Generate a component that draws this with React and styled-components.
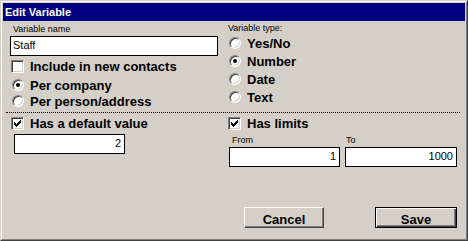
import React from "react";
import styled, { createGlobalStyle, css } from "styled-components";

const GlobalStyle = createGlobalStyle`
  html, body {
    margin: 0;
    padding: 0;
    background: #d4d0c8;
  }
  body {
    font-family: "Liberation Sans", Arial, sans-serif;
    color: #000;
  }
`;

const Window = styled.div`
  box-sizing: border-box;
  width: 468px;
  height: 241px;
  display: flex;
  background: #d4d0c8;
  border: 1px solid;
  border-color: #d4d0c8 #404040 #404040 #d4d0c8;
`;

const Frame = styled.div`
  flex: 1;
  display: flex;
  flex-direction: column;
  padding: 1px;
  border: 1px solid;
  border-color: #fff #808080 #808080 #fff;
`;

const TitleBar = styled.div`
  box-sizing: border-box;
  height: 18px;
  padding: 1px 0 0 2px;
  background: #000080;
  color: #fff;
  font-weight: bold;
  font-size: 11px;
  line-height: 17px;
`;

const Body = styled.div`
  flex: 1;
  display: flex;
  flex-direction: column;
  padding: 2px 8px 0 7px;
`;

const Section = styled.div`
  display: grid;
  grid-template-columns: 218px 1fr;
`;

const Column = styled.div`
  display: flex;
  flex-direction: column;
`;

const SmallLabel = styled.div`
  height: ${(p) => p.$h || 13}px;
  padding-left: ${(p) => p.$indent || 0}px;
  font-size: 9px;
  line-height: ${(p) => p.$h || 13}px;
`;

const Field = styled.div`
  box-sizing: border-box;
  width: ${(p) => p.$w}px;
  height: 20px;
  margin-left: ${(p) => p.$indent || 0}px;
  padding: 0 3px 0 2px;
  background: #fff;
  border: 1px solid #000;
  font-size: 11px;
  line-height: 17px;
  text-align: ${(p) => (p.$number ? "right" : "left")};
`;

const Option = styled.div`
  display: flex;
  align-items: center;
  gap: 6px;
  height: ${(p) => p.$h}px;
  padding-left: ${(p) => p.$indent || 0}px;
  font-weight: bold;
  font-size: 13px;
  white-space: nowrap;
`;

const CheckBox = styled.span`
  box-sizing: border-box;
  flex-shrink: 0;
  width: 13px;
  height: 13px;
  display: flex;
  align-items: center;
  justify-content: center;
  background: #fff;
  border: 1px solid;
  border-color: #808080 #fff #fff #808080;
  box-shadow: inset 1px 1px 0 #404040, inset -1px -1px 0 #d4d0c8;
`;

const RadioDot = styled.span`
  box-sizing: border-box;
  flex-shrink: 0;
  width: 12px;
  height: 12px;
  display: flex;
  align-items: center;
  justify-content: center;
  border-radius: 50%;
  background: #fff;
  border: 1px solid;
  border-color: #808080 #fff #fff #808080;
  box-shadow: inset 1px 1px 0 #404040, inset -1px -1px 0 #d4d0c8;
  &::after {
    content: "";
    width: 4px;
    height: 4px;
    border-radius: 50%;
    background: ${(p) => (p.$on ? "#000" : "transparent")};
  }
`;

const Divider = styled.div`
  margin: 3px -3px 0 -4px;
  border-top: 1px dotted #000;
`;

const Limits = styled.div`
  display: grid;
  grid-template-columns: 111px 112px;
  column-gap: 5px;
  margin-left: 1px;
`;

const Footer = styled.div`
  display: flex;
  justify-content: flex-end;
  gap: 51px;
  margin-top: 40px;
`;

const Button = styled.div`
  box-sizing: border-box;
  width: ${(p) => p.$w}px;
  height: 21px;
  padding-top: 5px;
  text-align: center;
  font-weight: bold;
  font-size: 13px;
  line-height: 14px;
  background: #d4d0c8;
  border: 1px solid;
  border-color: #fff #404040 #404040 #fff;
  box-shadow: inset -1px -1px 0 #808080;
  ${(p) =>
    p.$default &&
    css`
      border-color: #000;
      box-shadow: inset 1px 1px 0 #fff, inset -1px -1px 0 #404040,
        inset -2px -2px 0 #808080;
    `}
`;

const Tick = () => (
  <svg width="7" height="7" viewBox="0 0 7 7" shapeRendering="crispEdges">
    <path
      fill="#000"
      d="M0 2h1v3h-1z M1 3h1v3h-1z M2 4h1v3h-1z M3 3h1v3h-1z M4 2h1v3h-1z M5 1h1v3h-1z M6 0h1v3h-1z"
    />
  </svg>
);

const Check = ({ on, label, h, indent }) => (
  <Option $h={h} $indent={indent}>
    <CheckBox>{on && <Tick />}</CheckBox>
    {label}
  </Option>
);

const Radio = ({ on, label, h, indent }) => (
  <Option $h={h} $indent={indent}>
    <RadioDot $on={on} />
    {label}
  </Option>
);

const App = () => (
  <>
    <GlobalStyle />
    <Window>
      <Frame>
        <TitleBar>Edit Variable</TitleBar>
        <Body>
          <Section>
            <Column>
              <SmallLabel $indent={3}>Variable name</SmallLabel>
              <Field $w={208}>Staff</Field>
              <Check label="Include in new contacts" h={21} indent={1} />
              <Radio on label="Per company" h={16} indent={2} />
              <Radio label="Per person/address" h={16} indent={2} />
            </Column>
            <Column>
              <SmallLabel $h={11}>Variable type:</SmallLabel>
              <Radio label="Yes/No" h={18} indent={1} />
              <Radio on label="Number" h={18} indent={1} />
              <Radio label="Date" h={18} indent={1} />
              <Radio label="Text" h={18} indent={1} />
            </Column>
          </Section>
          <Divider />
          <Section>
            <Column>
              <Check on label="Has a default value" h={21} indent={1} />
              <Field $w={111} $indent={4} $number>
                2
              </Field>
            </Column>
            <Column>
              <Check on label="Has limits" h={21} />
              <Limits>
                <SmallLabel $indent={3}>From</SmallLabel>
                <SmallLabel $indent={1}>To</SmallLabel>
                <Field $w={111} $number>
                  1
                </Field>
                <Field $w={112} $number>
                  1000
                </Field>
              </Limits>
            </Column>
          </Section>
          <Footer>
            <Button $w={80}>Cancel</Button>
            <Button $w={82} $default>
              Save
            </Button>
          </Footer>
        </Body>
      </Frame>
    </Window>
  </>
);

export default App;
